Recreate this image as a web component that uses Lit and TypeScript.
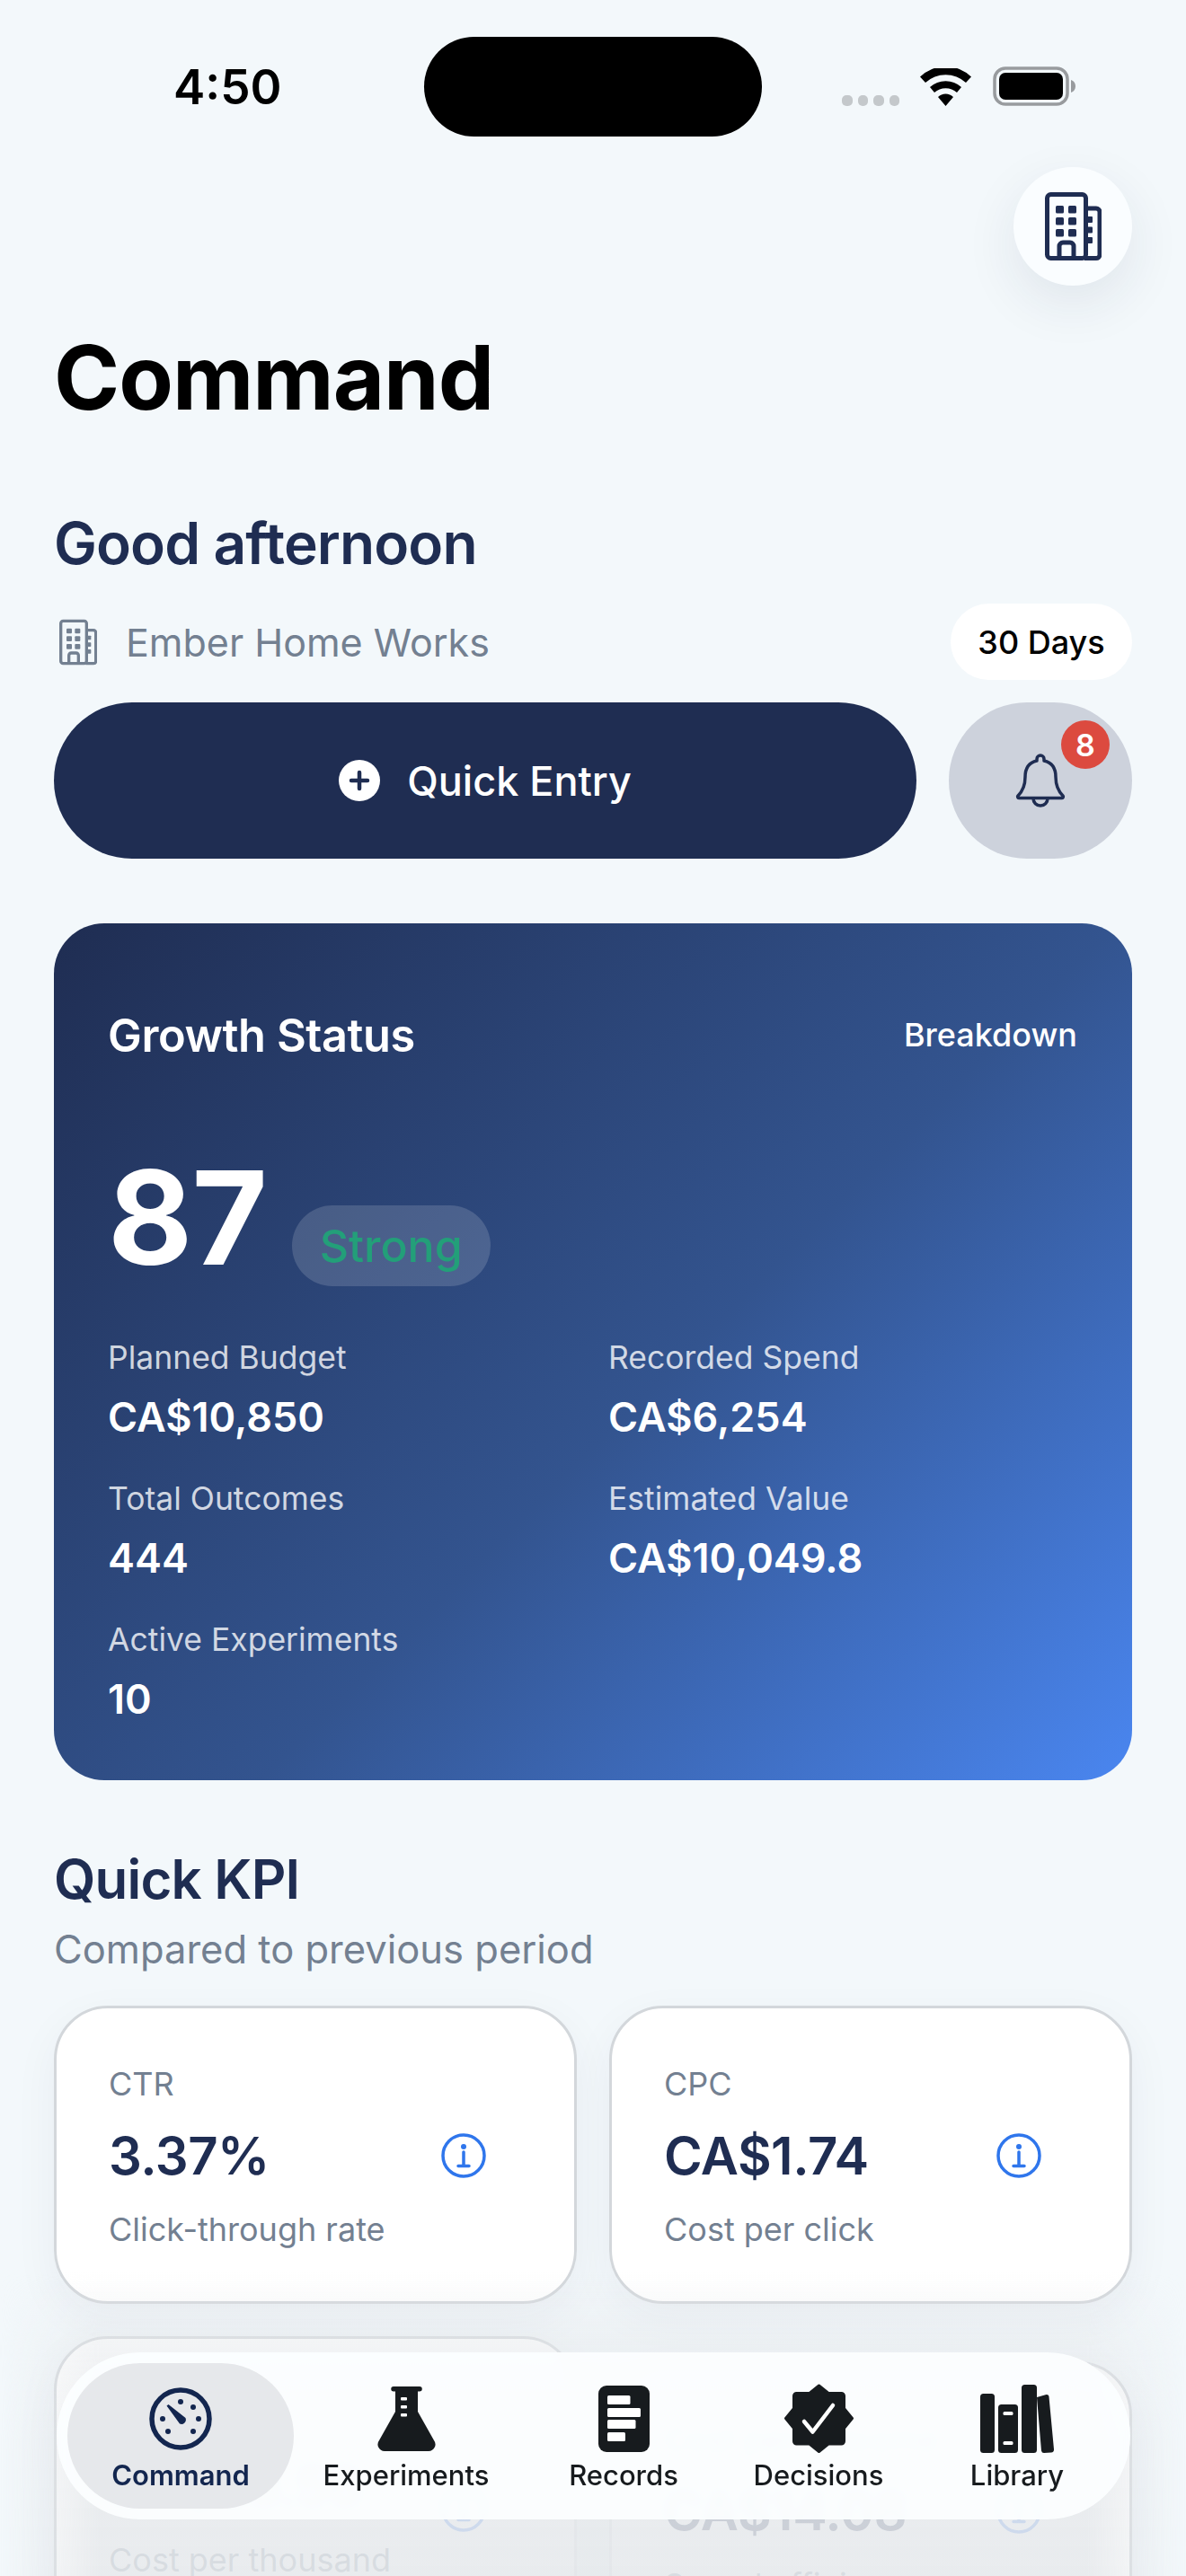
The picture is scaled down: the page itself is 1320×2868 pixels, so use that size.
import { LitElement, html, css, svg, unsafeCSS } from "lit";
import { customElement } from "lit/decorators.js";

const navy = "#1f2d52";

// two towers, used big in the round button and small next to the company name
const buildingIcon = (color: string) => html`
  <svg viewBox="0 0 63 76" fill="none" stroke=${color} stroke-width="5" stroke-linejoin="round">
    <rect x="2.500" y="2.500" width="43" height="71" rx="4" />
    <path d="M46 18h11a4 4 0 0 1 4 4v48a4 4 0 0 1-4 3.500H44" />
    <path d="M16 73v-13a4 4 0 0 1 4-4h8a4 4 0 0 1 4 4v13" />
    <g fill=${color} stroke="none">
      <rect x="12" y="15" width="9" height="8.500" rx="1.500" />
      <rect x="26" y="15" width="9" height="8.500" rx="1.500" />
      <rect x="12" y="28" width="9" height="8.500" rx="1.500" />
      <rect x="26" y="28" width="9" height="8.500" rx="1.500" />
      <rect x="12" y="41" width="9" height="8.500" rx="1.500" />
      <rect x="26" y="41" width="9" height="8.500" rx="1.500" />
      <rect x="47" y="27" width="6" height="7" rx="1" />
      <rect x="47" y="38.500" width="6" height="7" rx="1" />
      <rect x="47" y="50" width="6" height="7" rx="1" />
    </g>
  </svg>
`;

const infoIcon = html`
  <svg viewBox="0 0 50 50" fill="none" stroke="#2f76ec" stroke-width="3.500">
    <circle cx="25" cy="25" r="23" />
    <circle cx="25" cy="15" r="3" fill="#2f76ec" stroke="none" />
    <path d="M25 21v15M19 36.500h12" stroke-linecap="round" />
  </svg>
`;

const navIcons: Record<string, unknown> = {
  gauge: svg`
    <circle cx="35" cy="35" r="32" fill="none" stroke="currentColor" stroke-width="5.500" />
    <g fill="currentColor">
      <circle cx="35" cy="16" r="3" /><circle cx="49" cy="22" r="3" />
      <circle cx="55" cy="35" r="3" /><circle cx="49" cy="49" r="3" />
      <circle cx="21" cy="49" r="3" /><circle cx="15" cy="35" r="3" />
      <path d="M19.500 20.500 21.500 19 40.500 34A5 5 0 0 1 34 40.500Z" />
    </g>
  `,
  flask: svg`
    <path fill="currentColor" d="M18 0H47a2.750 2.750 0 0 1 0 5.500H45V28L63 60a7.500 7.500 0 0 1-6 12H8a7.500 7.500 0 0 1-6-12L20 28V5.500H18a2.750 2.750 0 0 1 0-5.500z" />
    <g fill="#fff"><rect x="26" y="12" width="7" height="3.400" rx="1" /><rect x="26" y="21" width="7" height="3.400" rx="1" /><rect x="26" y="30" width="7" height="3.400" rx="1" /></g>
  `,
  records: svg`
    <rect x="0" y="0" width="57" height="74" rx="9" fill="currentColor" />
    <g fill="#fff"><rect x="10" y="11" width="25.500" height="10" rx="1.500" /><rect x="10" y="25" width="37" height="10" rx="1.500" /><rect x="10" y="38" width="31.500" height="10" rx="1.500" /><rect x="10" y="52" width="20" height="10" rx="1.500" /></g>
  `,
  badge: svg`
    <path fill="currentColor" stroke="currentColor" stroke-width="3" stroke-linejoin="round" d="M38.500 2 49 10.500H63.500a3 3 0 0 1 3 3V27.500L75.500 38.500 66.500 49.500V64a3 3 0 0 1-3 3H49L38.500 75.500 28 67H13.500a3 3 0 0 1-3-3V49.500L1.500 38.500 10.500 27.500V13.500a3 3 0 0 1 3-3H28z" />
    <path fill="none" stroke="#fff" stroke-width="4.500" stroke-linecap="round" stroke-linejoin="round" d="M22 42l9.500 11.500L54 24" />
  `,
  books: svg`
    <g fill="currentColor">
      <rect x="0" y="10" width="16" height="66" rx="3.500" />
      <rect x="20" y="22" width="22" height="54" rx="3.500" />
      <rect x="46" y="0" width="17" height="76" rx="3.500" />
      <path d="M63 14l10.500-3a2.500 2.500 0 0 1 3 2.500L82 72a3 3 0 0 1-3 3.500l-8 .5a3 3 0 0 1-3-2.500z" />
    </g>
    <g fill="#fff"><rect x="25.500" y="30" width="11" height="4" rx="1.500" /><rect x="25.500" y="63" width="11" height="4" rx="1.500" /></g>
  `,
};

const stats = [
  ["Planned Budget", "CA$10,850"],
  ["Recorded Spend", "CA$6,254"],
  ["Total Outcomes", "444"],
  ["Estimated Value", "CA$10,049.8"],
  ["Active Experiments", "10"],
];

const kpis = [
  { k: "CTR", v: "3.37%", s: "Click-through rate", cls: "" },
  { k: "CPC", v: "CA$1.74", s: "Cost per click", cls: "" },
  { k: "CPM", v: "CA$58.56", s: "Cost per thousand", cls: "low" },
  { k: "Cost per outcome", v: "CA$14.08", s: "Spend efficiency", cls: "shift" },
];

const tabs = [
  { label: "Command", icon: "gauge", w: 70, h: 70, on: true },
  { label: "Experiments", icon: "flask", w: 65, h: 72 },
  { label: "Records", icon: "records", w: 57, h: 74 },
  { label: "Decisions", icon: "badge", w: 77, h: 78 },
  { label: "Library", icon: "books", w: 83, h: 77 },
];

@customElement("app-root")
export class AppRoot extends LitElement {
  static styles = css`
    :host {
      display: block;
      position: relative;
      width: 1320px;
      height: 2868px;
      overflow: hidden;
      background: #f3f8fb;
      font-family: Inter, "Liberation Sans", sans-serif;
      color: ${unsafeCSS(navy)};
    }
    .status {
      height: 186px;
      box-sizing: border-box;
      padding: 41px 62px 0 193px;
      display: flex;
      align-items: flex-start;
    }
    .time {
      width: 279px;
      margin-top: 28px;
      font-size: 53px;
      line-height: 56px;
      font-weight: 600;
      color: #000;
    }
    .island {
      width: 376px;
      height: 111px;
      border-radius: 56px;
      background: #000;
    }
    .status-right {
      margin-left: 89px;
      margin-top: 34px;
      height: 43px;
      display: flex;
      align-items: flex-end;
    }
    .dots { display: flex; gap: 6px; margin-right: 23px; }
    .dots i { width: 11.500px; height: 12px; border-radius: 5px; background: #c4c8cb; }
    .wifi { width: 57px; height: 42px; margin-right: 24px; }
    .battery { width: 92px; height: 44px; display: block; }

    .head { display: flex; justify-content: flex-end; padding-right: 60px; }
    .org-btn {
      width: 132px;
      height: 132px;
      border-radius: 50%;
      background: #fafdff;
      box-shadow: 0 20px 60px rgba(31, 45, 82, 0.09);
      display: flex;
      align-items: center;
      justify-content: center;
    }
    .org-btn svg { width: 63px; height: 76px; }

    main { padding: 0 60px; }
    h1 {
      margin: 48px 0 0;
      font-size: 99px;
      line-height: 108px;
      font-weight: 700;
      letter-spacing: -1px;
      color: #000;
    }
    .greet {
      margin: 92px 0 0;
      font-size: 64px;
      line-height: 78px;
      font-weight: 600;
      letter-spacing: -0.9px;
    }
    .org-row {
      margin-top: 28px;
      height: 85px;
      display: flex;
      align-items: center;
    }
    .org-row svg { width: 42px; height: 52px; margin: 0 32px 0 6px; }
    .org-name { flex: 1; font-size: 43px; color: #738091; }
    .range {
      width: 202px;
      height: 85px;
      border-radius: 43px;
      background: #fff;
      color: #000;
      font-size: 36px;
      font-weight: 500;
      display: flex;
      align-items: center;
      justify-content: center;
    }
    .actions { margin-top: 25px; display: flex; gap: 36px; }
    .quick {
      flex: 1;
      height: 174px;
      border-radius: 87px;
      background: ${unsafeCSS(navy)};
      color: #fff;
      font-size: 45px;
      font-weight: 500;
      display: flex;
      align-items: center;
      justify-content: center;
      gap: 30px;
    }
    .quick svg { width: 46px; height: 46px; }
    .bell {
      position: relative;
      width: 204px;
      height: 174px;
      border-radius: 87px;
      background: #cdd2dc;
      display: flex;
      align-items: center;
      justify-content: center;
    }
    .bell svg { width: 56px; height: 60px; }
    .badge {
      position: absolute;
      top: 20px;
      right: 25px;
      width: 54px;
      height: 54px;
      border-radius: 50%;
      background: #dc4a3f;
      color: #fff;
      font-size: 34px;
      font-weight: 600;
      display: flex;
      align-items: center;
      justify-content: center;
    }

    .growth {
      margin-top: 72px;
      height: 954px;
      box-sizing: border-box;
      padding: 92px 61px 0;
      border-radius: 56px;
      background: linear-gradient(135deg, #1f2d52 0%, #33548f 55%, #4a86f0 100%);
      color: #fff;
    }
    .growth-head { display: flex; justify-content: space-between; align-items: center; height: 64px; }
    .growth-title { font-size: 50.500px; font-weight: 600; letter-spacing: -0.4px; margin-left: -1px; }
    .growth-link { font-size: 36px; font-weight: 500; }
    .score { margin-top: 88px; height: 160px; display: flex; align-items: flex-end; gap: 28px; margin-left: -1px; }
    .score b { font-size: 145px; line-height: 160px; font-weight: 700; margin-bottom: -4px; letter-spacing: -1px; }
    .pill {
      height: 90px;
      padding: 0 31px;
      border-radius: 45px;
      background: rgba(255, 255, 255, 0.15);
      color: #239f79;
      font-size: 50px;
      font-weight: 500;
      display: flex;
      align-items: center;
    }
    .stats {
      margin-top: 58px;
      margin-left: -1px;
      display: grid;
      grid-template-columns: 557px 1fr;
      row-gap: 37px;
    }
    .stats span { display: block; font-size: 35.500px; line-height: 44px; color: rgba(255, 255, 255, 0.78); }
    .stats strong { display: block; margin-top: 12px; font-size: 45px; line-height: 64px; font-weight: 600; }

    h2 { margin: 74px 0 0; font-size: 60px; line-height: 72px; font-weight: 600; letter-spacing: -0.8px; }
    .sub { margin: 14px 0 0; font-size: 43.500px; line-height: 56px; color: #738091; }
    .kpis { margin-top: 35px; display: grid; grid-template-columns: 1fr 1fr; gap: 36px; align-items: start; }
    .kpi {
      height: 332px;
      box-sizing: border-box;
      padding: 62px 58px 0;
      border: 3px solid #d3d7db;
      border-radius: 60px;
      background: #fff;
      box-shadow: 0 16px 50px rgba(31, 45, 82, 0.05);
    }
    .kpi.shift { margin-top: 28px; }
    .kpi-label { font-size: 36px; line-height: 44px; color: #738091; }
    .kpi-row { margin-top: 20px; display: flex; justify-content: space-between; align-items: center; padding-right: 40px; height: 76px; }
    .kpi-row b { font-size: 58px; font-weight: 600; letter-spacing: -0.5px; }
    .kpi-row svg { width: 50px; height: 50px; }
    .kpi.low .kpi-row svg { margin-top: 52px; }
    .kpi-sub { margin-top: 22px; font-size: 36px; line-height: 44px; color: #738091; }

    /* grey veil over the content that scrolls under the tab bar */
    .fade {
      position: absolute;
      left: 0;
      right: 0;
      top: 2530px;
      bottom: 0;
      pointer-events: none;
      background: linear-gradient(to bottom, rgba(230, 233, 236, 0) 0%, rgba(230, 233, 236, 0.5) 24%, rgba(230, 233, 236, 0.85) 55%, rgba(230, 233, 236, 0.88) 100%);
      -webkit-mask-image: linear-gradient(to right, transparent 0, #000 110px, #000 1210px, transparent 100%);
      mask-image: linear-gradient(to right, transparent 0, #000 110px, #000 1210px, transparent 100%);
    }
    .nav {
      position: absolute;
      left: 63px;
      top: 2619px;
      width: 1195px;
      height: 186px;
      box-sizing: border-box;
      border-radius: 93px;
      background: rgba(252, 254, 255, 0.93);
      backdrop-filter: blur(6px);
      display: flex;
      align-items: stretch;
      padding: 12px 0 12px 12px;
    }
    .tab {
      flex: none;
      display: flex;
      flex-direction: column;
      align-items: center;
      color: #171b1e;
      font-size: 31px;
      font-weight: 500;
    }
    .tab .ico { height: 82px; margin-top: 21px; display: flex; align-items: center; }
    .tab span { line-height: 44px; }
    .tab.on { color: #13264f; font-weight: 600; background: #e6e8eb; border-radius: 81px; }
    .t0 { width: 252px; }
    .t1 { width: 250px; }
    .t2 { width: 234px; }
    .t3 { width: 200px; }
    .t4 { width: 242px; }
  `;

  render() {
    return html`
      <div class="status">
        <div class="time">4:50</div>
        <div class="island"></div>
        <div class="status-right">
          <div class="dots"><i></i><i></i><i></i><i></i></div>
          <svg class="wifi" viewBox="0 0 57 42"><path fill="#000" d="M28.500 42 20 32a12 12 0 0 1 17 0zM16 27l-5-6a26 26 0 0 1 35 0l-5 6a19 19 0 0 0-25 0zM6 16 0 9.500a41 41 0 0 1 57 0L51 16a33 33 0 0 0-45 0z" /></svg>
          <svg class="battery" viewBox="0 0 92 44">
            <rect x="2" y="2" width="81" height="40" rx="12" fill="none" stroke="#989b9e" stroke-width="3.500" />
            <rect x="7" y="7" width="71" height="30" rx="7" fill="#000" />
            <path d="M87 15c3 1 5 3.500 5 7s-2 6-5 7z" fill="#989b9e" />
          </svg>
        </div>
      </div>
      <div class="head"><div class="org-btn">${buildingIcon(navy)}</div></div>
      <main>
        <h1>Command</h1>
        <h3 class="greet">Good afternoon</h3>
        <div class="org-row">
          ${buildingIcon("#738091")}
          <div class="org-name">Ember Home Works</div>
          <div class="range">30 Days</div>
        </div>
        <div class="actions">
          <div class="quick">
            <svg viewBox="0 0 46 46"><circle cx="23" cy="23" r="23" fill="#fff" /><path d="M23 14v18M14 23h18" stroke=${navy} stroke-width="4.500" stroke-linecap="round" /></svg>
            Quick Entry
          </div>
          <div class="bell">
            <svg viewBox="0 0 56 60" fill="none" stroke=${navy} stroke-width="3.500" stroke-linejoin="round" stroke-linecap="round">
              <path d="M28 2a4 4 0 0 1 4 4v2c9 2 13 9 13 18 0 9 2 15 8 21a1.500 1.500 0 0 1-1 2.500H4a1.500 1.500 0 0 1-1-2.500c6-6 8-12 8-21 0-9 4-16 13-18V6a4 4 0 0 1 4-4z" />
              <path d="M20 50a8 8 0 0 0 16 0" />
            </svg>
            <div class="badge">8</div>
          </div>
        </div>

        <section class="growth">
          <div class="growth-head">
            <div class="growth-title">Growth Status</div>
            <div class="growth-link">Breakdown</div>
          </div>
          <div class="score"><b>87</b><div class="pill">Strong</div></div>
          <div class="stats">
            ${stats.map(([k, v]) => html`<div><span>${k}</span><strong>${v}</strong></div>`)}
          </div>
        </section>

        <h2>Quick KPI</h2>
        <p class="sub">Compared to previous period</p>
        <div class="kpis">
          ${kpis.map(
            (c) => html`
              <div class="kpi ${c.cls}">
                <div class="kpi-label">${c.k}</div>
                <div class="kpi-row"><b>${c.v}</b>${infoIcon}</div>
                <div class="kpi-sub">${c.s}</div>
              </div>
            `
          )}
        </div>
      </main>
      <div class="fade"></div>
      <nav class="nav">
        ${tabs.map(
          (t, i) => html`
            <div class="tab t${i} ${t.on ? "on" : ""}">
              <div class="ico">
                <svg width=${t.w} height=${t.h} viewBox="0 0 ${t.w} ${t.h}">${navIcons[t.icon]}</svg>
              </div>
              <span>${t.label}</span>
            </div>
          `
        )}
      </nav>
    `;
  }
}
